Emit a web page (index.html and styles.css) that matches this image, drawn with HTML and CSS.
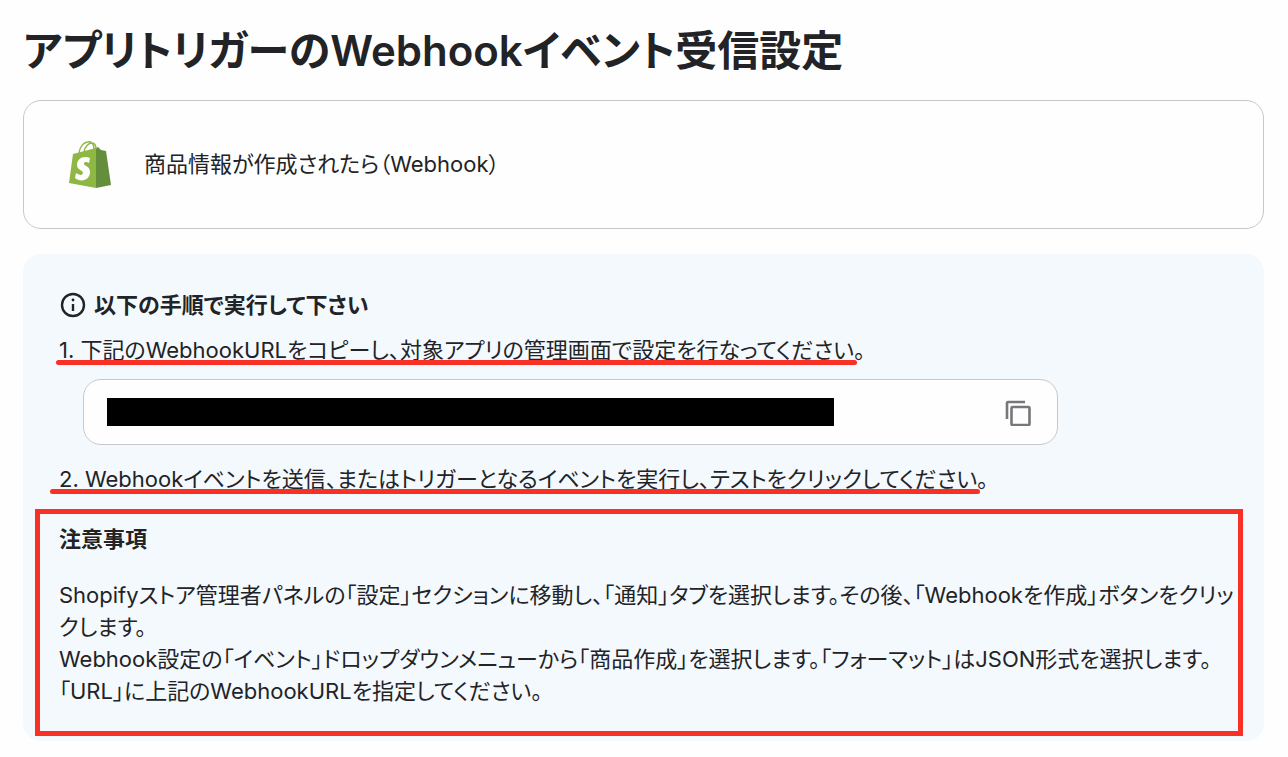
FILE: index.html
```html
<!DOCTYPE html>
<html lang="ja">

<head>
    <meta charset="UTF-8">
    <meta name="viewport" content="width=device-width, initial-scale=1.0">
    <title>アプリトリガーのWebhookイベント受信設定</title>
    <link rel="stylesheet" href="styles.css">
</head>

<body>
    <main class="page">
        <h1 class="page-title">アプリトリガーのWebhookイベント受信設定</h1>

        <section class="trigger-card">
            <svg class="app-logo" viewBox="0 0 42 48" aria-hidden="true">
                <path d="M4 14 L27 8 L27 48 L0 43 Z" fill="#8fb743" />
                <path d="M27 8 L29 7 L32 10 L37 11 L42 45 L27 48 Z" fill="#658e3c" />
                <path d="M10 13 C11 6 15 2 19 2 C23 1 25 5 25 9 M15 12 C16 6 20 3 23 3 C26 3 27 6 27 9" fill="none" stroke="#8db849" stroke-width="1.5" />
                <path d="M21 18 C14 15 8 19 8 25 C8 30 14 30 14 33 C13 36 10 35 7 33 L6 38 C12 43 21 40 21 32 C21 26 15 26 15 24 C15 21 18 22 20 23 Z" fill="#fff" />
            </svg>
            <p>商品情報が作成されたら（Webhook）</p>
        </section>

        <section class="guide">
            <h2 class="guide-title">
                <svg class="info-icon" viewBox="0 0 28 28" aria-hidden="true">
                    <circle cx="14" cy="14" r="11" fill="none" stroke="currentColor" stroke-width="2.4" />
                    <path d="M14 13 V20" stroke="currentColor" stroke-width="2.4" />
                    <circle cx="14" cy="9" r="1.4" fill="currentColor" />
                </svg>
                以下の手順で実行して下さい
            </h2>

            <p class="step step-copy">1. 下記のWebhookURLをコピーし、対象アプリの管理画面で設定を行なってください。</p>
            <div class="url-field">
                <input class="url-input" type="text" aria-label="WebhookURL" readonly>
                <button class="copy-button" type="button" aria-label="コピー">
                    <svg viewBox="0 0 28 28" aria-hidden="true">
                        <path d="M3 21 V5 Q3 4 4 4 H21" fill="none" stroke="currentColor" stroke-width="2.6" />
                        <rect x="7.5" y="9" width="18" height="18" rx="1" fill="none" stroke="currentColor" stroke-width="2.6" />
                    </svg>
                </button>
            </div>
            <p class="step step-test">2. Webhookイベントを送信、またはトリガーとなるイベントを実行し、テストをクリックしてください。</p>

            <div class="notes">
                <h3 class="notes-title">注意事項</h3>
                <p>Shopifyストア管理者パネルの「設定」セクションに移動し、「通知」タブを選択します。その後、「Webhookを作成」ボタンをクリックします。</p>
                <p>Webhook設定の「イベント」ドロップダウンメニューから「商品作成」を選択します。「フォーマット」はJSON形式を選択します。</p>
                <p>「URL」に上記のWebhookURLを指定してください。</p>
            </div>
        </section>
    </main>
</body>

</html>
```

FILE: styles.css
```css
* {
    box-sizing: border-box;
}

body {
    margin: 0;
    background-color: #fefefe;
    color: #222326;
    font-family: Inter, "Noto Sans CJK JP", sans-serif;
    font-size: 22px;
    line-height: 32px;
    font-feature-settings: "palt";
}

h1,
h2,
h3,
p {
    margin: 0;
}

.page {
    padding: 21px 24px 16px 23px;
}

.page-title {
    font-size: 42px;
    font-weight: 600;
    line-height: 60px;
    margin-bottom: 19px;
}

.trigger-card {
    display: flex;
    align-items: center;
    gap: 33px;
    padding: 39px 45px 40px;
    border: 1px solid #c8c8cc;
    border-radius: 18px;
    margin-bottom: 25px;
}

.app-logo {
    width: 42px;
    height: 48px;
}

/* Steps panel */
.guide {
    padding: 35px 36px 5px;
    border-radius: 18px;
    background-color: #f4f9fd;
}

.guide-title {
    display: flex;
    align-items: center;
    gap: 7px;
    font-size: 22px;
    font-weight: 600;
    margin-bottom: 13px;
}

.info-icon {
    width: 28px;
    height: 28px;
}

.step {
    position: relative;
    width: fit-content;
}

/* Red marker line under each step */
.step::after {
    content: "";
    position: absolute;
    right: 8px;
    bottom: 1px;
    left: -3px;
    height: 5px;
    border-radius: 3px;
    background-color: #f93026;
}

.step-test::after {
    left: -9px;
}

.url-field {
    display: flex;
    align-items: center;
    justify-content: space-between;
    max-width: 975px;
    margin: 13px 0 18px 24px;
    padding: 16px 23px;
    border: 1px solid #c8c8cc;
    border-radius: 18px;
    background-color: #fefefe;
}

.url-input {
    flex: 0 1 727px;
    min-width: 0;
    height: 28px;
    padding: 0;
    border: 0;
    background-color: #000;
}

.copy-button {
    width: 32px;
    height: 32px;
    padding: 2px;
    border: 0;
    background: none;
    color: #77777b;
    cursor: pointer;
}

.copy-button svg {
    display: block;
}

.notes {
    margin: 14px -15px 0 -24px;
    padding: 9px 0 24px 19px;
    border: 5px solid #f93026;
}

.notes-title {
    font-size: 22px;
    font-weight: 600;
    margin-bottom: 24px;
}
```
